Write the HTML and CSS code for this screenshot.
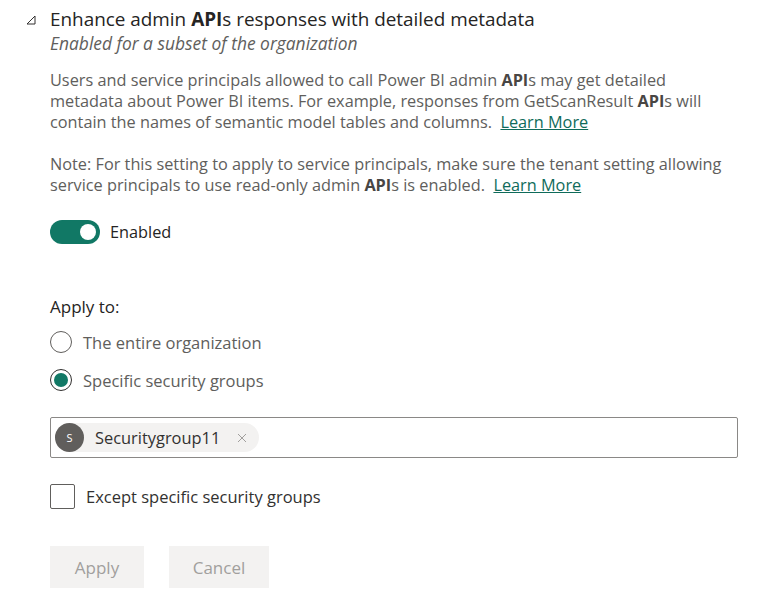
FILE: index.html
```html
<!DOCTYPE html>
<html lang="en">
<head>
<meta charset="utf-8">
<title>Tenant setting</title>
<link rel="stylesheet" href="styles.css">
</head>
<body>
<div class="setting">
  <div class="header">
    <svg class="caret" width="10" height="10" viewBox="0 0 10 10" aria-hidden="true">
      <path d="M1 9 L9 9 L9 1 Z" fill="none" stroke="#323130" stroke-width="1" stroke-linejoin="miter"/>
    </svg>
    <div class="titles">
      <div class="title">Enhance admin <b>API</b>s responses with detailed metadata</div>
      <div class="subtitle">Enabled for a subset of the organization</div>
    </div>
  </div>
  <div class="content">
    <p class="desc">Users and service principals allowed to call Power BI admin <b>API</b>s may get detailed metadata about Power BI items. For example, responses from GetScanResult <b>API</b>s will contain the names of semantic model tables and columns. &nbsp;<a href="#">Learn More</a></p>
    <p class="desc note">Note: For this setting to apply to service principals, make sure the tenant setting allowing service principals to use read-only admin <b>API</b>s is enabled. &nbsp;<a href="#">Learn More</a></p>
    <div class="toggle-row">
      <span class="toggle"><span class="knob"></span></span>
      <span class="toggle-label">Enabled</span>
    </div>
    <div class="apply-label">Apply to:</div>
    <div class="radios">
      <div class="radio-row"><span class="radio"></span><span>The entire organization</span></div>
      <div class="radio-row"><span class="radio checked"><span class="dot"></span></span><span>Specific security groups</span></div>
    </div>
    <div class="picker">
      <span class="chip">
        <span class="avatar">S</span>
        <span class="chip-text">Securitygroup11</span>
        <svg class="chip-x" width="10" height="10" viewBox="0 0 10 10" aria-hidden="true">
          <path d="M1 1 L9 9 M9 1 L1 9" stroke="#a19f9d" stroke-width="1"/>
        </svg>
      </span>
    </div>
    <div class="check-row">
      <span class="checkbox"></span>
      <span>Except specific security groups</span>
    </div>
    <div class="buttons">
      <button class="btn btn-apply" disabled>Apply</button>
      <button class="btn btn-cancel" disabled>Cancel</button>
    </div>
  </div>
</div>
</body>
</html>
```
FILE: styles.css
```css
* { box-sizing: border-box; }
html, body { margin: 0; padding: 0; background: #ffffff; }
body {
  font-family: "Open Sans", "Noto Sans", "Liberation Sans", sans-serif;
  color: #323130;
}
.setting { width: 762px; }
.header {
  display: flex;
  align-items: flex-start;
  padding-top: 6px;
}
.caret {
  margin-left: 26px;
  margin-top: 9px;
  width: 10px;
  height: 10px;
  flex: none;
}
.titles { margin-left: 14px; }
.title {
  font-size: 18.9px;
  line-height: 26px;
  color: #252423;
}
.title b { font-weight: 700; }
.subtitle {
  font-size: 17.4px;
  line-height: 22px;
  font-style: italic;
  color: #605e5c;
}
.content { padding-left: 50px; width: 732px; }
.desc {
  margin: 16px 0 0 0;
  font-size: 16.3px;
  line-height: 21px;
  color: #605e5c;
}
.desc.note { margin-top: 21px; }
.desc b { color: #484644; font-weight: 700; }
.desc a { color: #0f6b5a; text-decoration: underline; }
.toggle-row {
  display: flex;
  align-items: center;
  margin-top: 23px;
  height: 25px;
}
.toggle {
  width: 50px;
  height: 24px;
  border-radius: 12px;
  background: #117865;
  display: flex;
  align-items: center;
  justify-content: flex-end;
  padding-right: 4px;
}
.knob {
  width: 16px;
  height: 16px;
  border-radius: 50%;
  background: #ffffff;
}
.toggle-label {
  margin-left: 10px;
  font-size: 16.3px;
  color: #252423;
}
.apply-label {
  margin-top: 52px;
  font-size: 17px;
  line-height: 22px;
  color: #252423;
}
.radios {
  display: flex;
  flex-direction: column;
  gap: 16px;
  margin-top: 13px;
}
.radio-row {
  display: flex;
  align-items: center;
  height: 22px;
  font-size: 16.5px;
  color: #605e5c;
}
.radio {
  width: 22px;
  height: 22px;
  border-radius: 50%;
  border: 1px solid #605e5c;
  margin-right: 11px;
  display: flex;
  align-items: center;
  justify-content: center;
  flex: none;
}
.radio.checked { border-color: #323130; }
.dot {
  width: 14px;
  height: 14px;
  border-radius: 50%;
  background: #117865;
}
.picker {
  margin-top: 26px;
  width: 688px;
  height: 41px;
  border: 1px solid #8a8886;
  border-radius: 2px;
  display: flex;
  align-items: center;
  padding-left: 4px;
}
.chip {
  display: flex;
  align-items: center;
  height: 29px;
  background: #f3f2f1;
  border-radius: 15px;
  padding-right: 12px;
}
.avatar {
  width: 29px;
  height: 29px;
  border-radius: 50%;
  background: #605e5c;
  color: #ffffff;
  font-size: 11px;
  display: flex;
  align-items: center;
  justify-content: center;
}
.chip-text {
  margin-left: 11px;
  font-size: 16.4px;
  color: #323130;
}
.chip-x { margin-left: 17px; }
.check-row {
  display: flex;
  align-items: center;
  margin-top: 26px;
  height: 24px;
  font-size: 16.5px;
  color: #323130;
}
.checkbox {
  width: 25px;
  height: 25px;
  border: 1px solid #605e5c;
  border-radius: 2px;
  margin-right: 11px;
  flex: none;
}
.buttons {
  display: flex;
  gap: 25px;
  margin-top: 38px;
}
.btn {
  height: 42px;
  border: none;
  background: #f3f2f1;
  color: #a19f9d;
  font-family: inherit;
  font-size: 17px;
  padding: 0;
}
.btn-apply { width: 94px; }
.btn-cancel { width: 100px; }
```
